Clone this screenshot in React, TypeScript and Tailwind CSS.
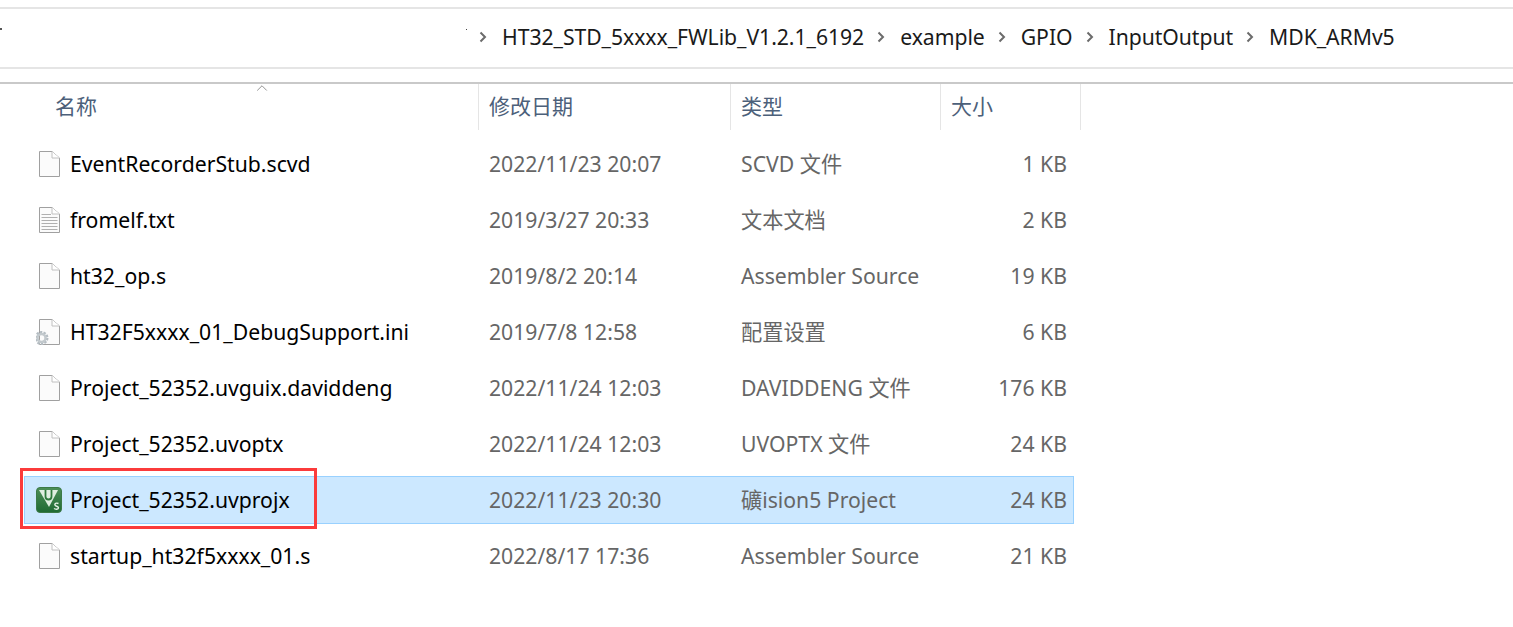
import React from 'react';
import { ChevronUp } from 'lucide-react';

const font = "font-['Noto_Sans','Noto_Sans_CJK_SC',sans-serif]";

type Kind = 'blank' | 'text' | 'config' | 'keil';

const files: { name: string; date: string; type: string; size: string; icon: Kind; selected?: boolean }[] = [
  { name: 'EventRecorderStub.scvd', date: '2022/11/23 20:07', type: 'SCVD 文件', size: '1 KB', icon: 'blank' },
  { name: 'fromelf.txt', date: '2019/3/27 20:33', type: '文本文档', size: '2 KB', icon: 'text' },
  { name: 'ht32_op.s', date: '2019/8/2 20:14', type: 'Assembler Source', size: '19 KB', icon: 'blank' },
  { name: 'HT32F5xxxx_01_DebugSupport.ini', date: '2019/7/8 12:58', type: '配置设置', size: '6 KB', icon: 'config' },
  { name: 'Project_52352.uvguix.daviddeng', date: '2022/11/24 12:03', type: 'DAVIDDENG 文件', size: '176 KB', icon: 'blank' },
  { name: 'Project_52352.uvoptx', date: '2022/11/24 12:03', type: 'UVOPTX 文件', size: '24 KB', icon: 'blank' },
  { name: 'Project_52352.uvprojx', date: '2022/11/23 20:30', type: '礦ision5 Project', size: '24 KB', icon: 'keil', selected: true },
  { name: 'startup_ht32f5xxxx_01.s', date: '2022/8/17 17:36', type: 'Assembler Source', size: '21 KB', icon: 'blank' },
];

const crumbs = ['HT32_STD_5xxxx_FWLib_V1.2.1_6192', 'example', 'GPIO', 'InputOutput', 'MDK_ARMv5'];

function Chevron() {
  return (
    <svg width="18" height="18" viewBox="0 0 18 18" className="mr-[10px]">
      <path d="M6.500 4.500L11 9L6.500 13.500" fill="none" stroke="#6b6b6b" strokeWidth="2" />
    </svg>
  );
}

function FileIcon({ kind }: { kind: Kind }) {
  if (kind === 'keil') {
    return (
      <svg width="26" height="26" viewBox="0 0 26 26">
        <defs>
          <linearGradient id="keil" x1="0" y1="0" x2="0" y2="1">
            <stop offset="0" stopColor="#4d8f58" />
            <stop offset="1" stopColor="#1f6a33" />
          </linearGradient>
        </defs>
        <rect x="0.500" y="0.500" width="25" height="25" rx="3.500" fill="url(#keil)" stroke="#3c7a48" />
        <path d="M3 3H22L13 20Z" fill="#dfeee0" />
        <path d="M9.500 3V9.500C9.500 11.500 10.500 12.500 12.500 12.500S15.500 11.500 15.500 9.500V3" fill="none" stroke="#2f7a3c" strokeWidth="1.800" />
        <path d="M22.500 16.500C20 15.500 18.500 16.500 19 18S22.500 19 22.500 20.800 19.500 22.500 18 21.500" fill="none" stroke="#e6f2e6" strokeWidth="1.400" />
      </svg>
    );
  }
  return (
    <svg width="26" height="26" viewBox="0 0 26 26">
      <path d="M3.500 0.500H16L23.500 7V25.500H3.500Z" fill="#fbfbfb" stroke="#a0a0a0" />
      <path d="M16 0.500V7H23.500" fill="#fff" stroke="#c0c0c0" />
      {kind === 'text' && (
        <path d="M5.500 7.500H15M5.500 10.500H21.500M5.500 13.500H21.500M5.500 16.500H21.500M5.500 19.500H21.500M5.500 22.500H21.500" stroke="#b0b0b0" />
      )}
      {kind === 'config' && (
        <g>
          <circle cx="5.500" cy="19" r="5.500" fill="none" stroke="#b4bcc2" strokeWidth="3" strokeDasharray="2.200 1.200" />
          <circle cx="5.500" cy="19" r="4" fill="none" stroke="#c2c9cd" strokeWidth="2.500" />
        </g>
      )}
    </svg>
  );
}

export default function App() {
  return (
    <div className={`relative w-[1513px] h-[627px] overflow-hidden bg-white ${font}`}>
      {/* address bar */}
      <div className="mt-[7px] h-[62px] pb-[2px] border-y-2 border-[#e5e5e5] flex items-center pl-[474px] text-[21.2px] text-[#1a1a1a]">
        {crumbs.map((c) => (
          <div key={c} className="flex items-center">
            <Chevron />
            <span className="mr-[8px] tracking-[-0.05px]">{c}</span>
          </div>
        ))}
      </div>
      <div className="absolute left-0 top-[28px] w-[2px] h-[2px] bg-[#555]" />
      <div className="absolute left-[466px] top-[29px] w-px h-px bg-[#444]" />

      {/* column headers */}
      <div className="relative mt-[13px] h-[48px] border-t-2 border-[#c9c9c9] flex text-[21px] text-[#4c607a]">
        <ChevronUp className="absolute left-[253px] -top-[5px] w-[18px] h-[18px] text-[#888]" strokeWidth={1.2} />
        <div className="w-[479px] pl-[55px] flex items-center border-r border-[#e5e5e5]">名称</div>
        <div className="w-[252px] pl-[10px] flex items-center border-r border-[#e5e5e5]">修改日期</div>
        <div className="w-[210px] pl-[10px] flex items-center border-r border-[#e5e5e5]">类型</div>
        <div className="w-[140px] pl-[10px] flex items-center border-r border-[#e5e5e5]">大小</div>
      </div>

      {/* rows */}
      <div className="mt-[10px] ml-[24px] w-[1050px] flex flex-col gap-[8px]">
        {files.map((f) => (
          <div
            key={f.name}
            className={`h-[48px] flex items-center text-[21.2px] border ${f.selected ? 'bg-[#cce8ff] border-[#99d1ff]' : 'border-transparent'}`}
          >
            <div className="w-[454px] flex items-center shrink-0">
              <div className="ml-[11px] w-[26px] h-[26px] shrink-0">
                <FileIcon kind={f.icon} />
              </div>
              <span className="ml-[8px] text-black whitespace-nowrap">{f.name}</span>
            </div>
            <div className="w-[252px] pl-[10px] shrink-0 text-[#666]">{f.date}</div>
            <div className="w-[210px] pl-[10px] shrink-0 text-[#666] whitespace-nowrap">{f.type}</div>
            <div className="flex-1 pr-[6px] text-right text-[#666]">{f.size}</div>
          </div>
        ))}
      </div>

      {/* red annotation box */}
      <div className="absolute left-[20px] top-[468px] w-[297px] h-[61px] border-[3px] border-[#fb3b3b]" />
    </div>
  );
}
